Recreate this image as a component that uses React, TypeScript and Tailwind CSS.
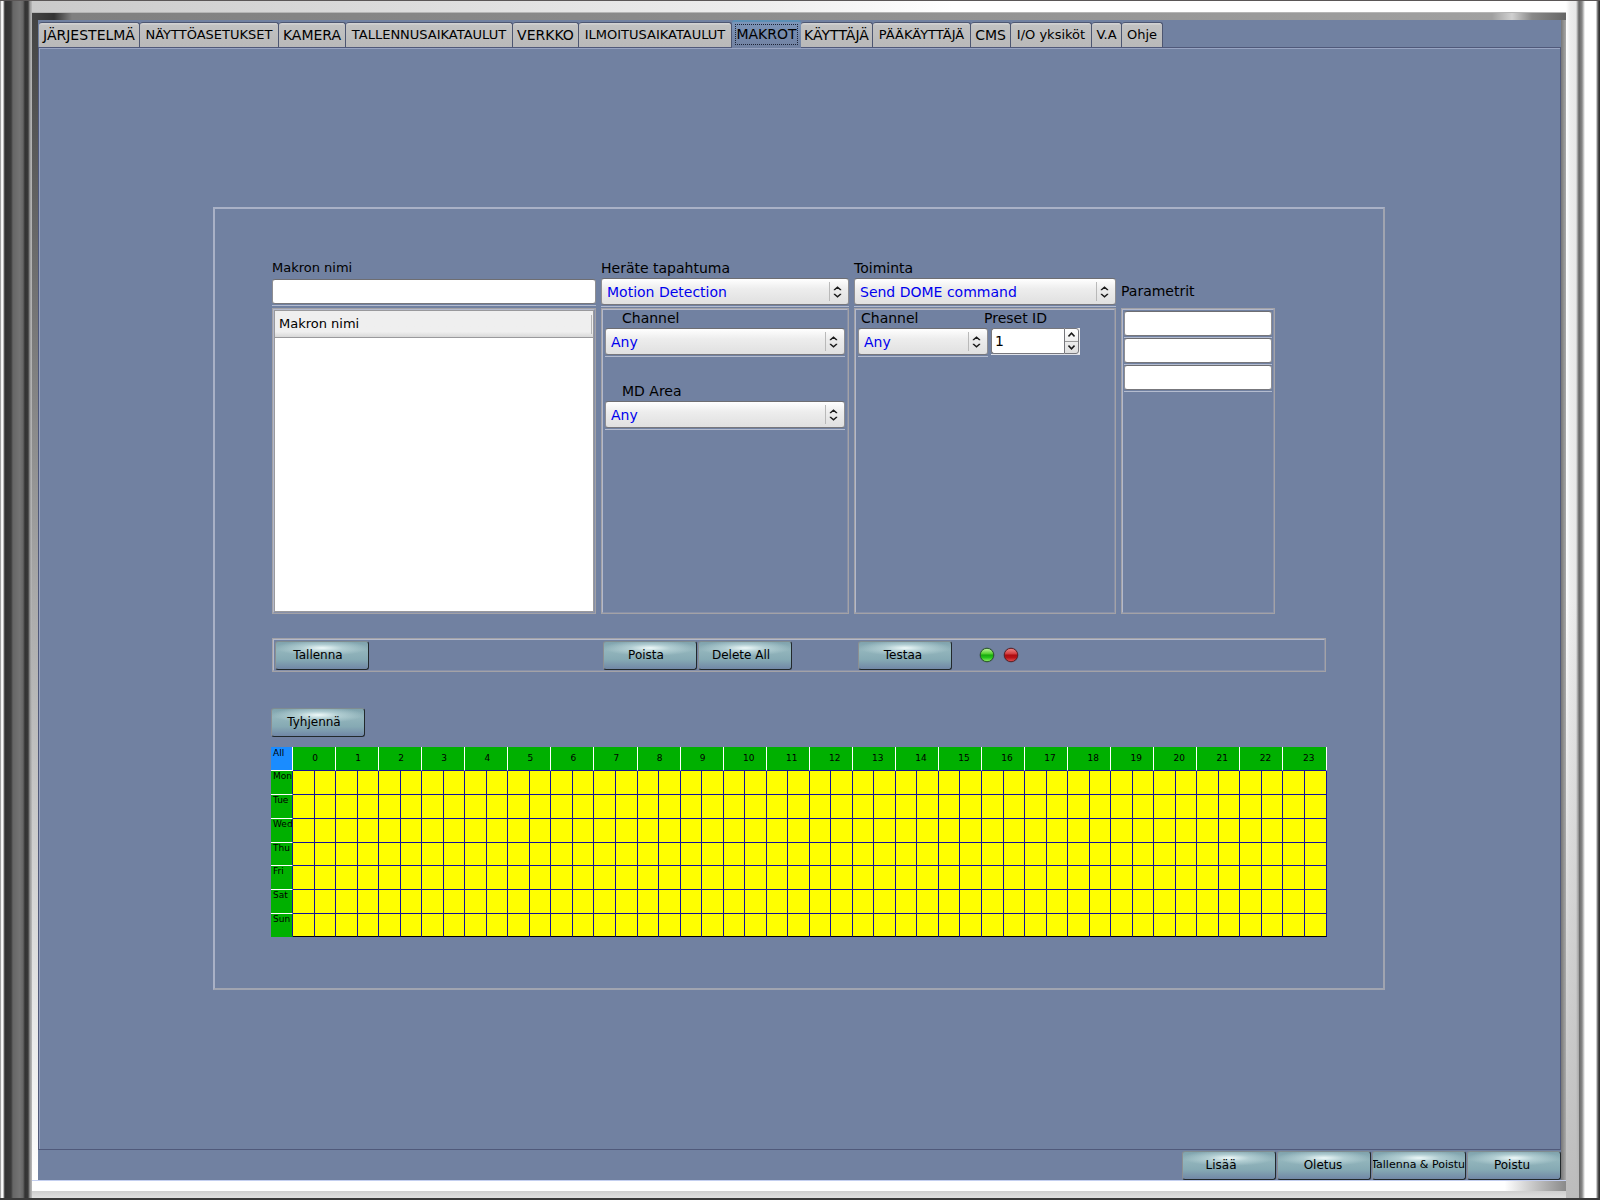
import { useState } from "react";
import type { ReactNode } from "react";

const tabs = [
  { label: "JÄRJESTELMÄ", width: "w-[101px]", size: "text-[14px]" },
  { label: "NÄYTTÖASETUKSET", width: "w-[139px]", size: "text-[13px]" },
  { label: "KAMERA", width: "w-[67px]", size: "text-[14px]" },
  { label: "TALLENNUSAIKATAULUT", width: "w-[167px]", size: "text-[13px]" },
  { label: "VERKKO", width: "w-[66px]", size: "text-[14px]" },
  { label: "ILMOITUSAIKATAULUT", width: "w-[153px]", size: "text-[13px]" },
  { label: "MAKROT", width: "w-[69px]", size: "text-[14px]" },
  { label: "KÄYTTÄJÄ", width: "w-[72px]", size: "text-[14px]" },
  { label: "PÄÄKÄYTTÄJÄ", width: "w-[98px]", size: "text-[13px]" },
  { label: "CMS", width: "w-[40px]", size: "text-[14px]" },
  { label: "I/O yksiköt", width: "w-[81px]", size: "text-[13px]" },
  { label: "V.A", width: "w-[30px]", size: "text-[13px]" },
  { label: "Ohje", width: "w-[41px]", size: "text-[13px]" },
];

const days = [
  { label: "Mon", height: "h-[24px]" },
  { label: "Tue", height: "h-[24px]" },
  { label: "Wed", height: "h-[24px]" },
  { label: "Thu", height: "h-[23px]" },
  { label: "Fri", height: "h-[24px]" },
  { label: "Sat", height: "h-[24px]" },
  { label: "Sun", height: "h-[23px]" },
];

const hours = Array.from({ length: 24 }, (_, i) => i);
const halfHours = Array.from({ length: 48 }, (_, i) => i);

function TabBar() {
  const [active, setActive] = useState("MAKROT");
  return (
    <div role="tablist" className="flex h-[27px] items-end pl-px">
      {tabs.map((t) =>
        t.label === active ? (
          <button
            key={t.label}
            role="tab"
            aria-selected="true"
            className={`${t.width} z-10 h-[28px] shrink-0 self-start rounded-t-[3px] border-t-2 border-t-[#5b8fb5] bg-linear-to-b from-[#7c95b8] to-[#7181a1] px-[3px] pt-px pb-[3px]`}
          >
            <span className={`${t.size} flex h-[21px] items-center justify-center border border-dotted border-[#1c2436] whitespace-nowrap`}>
              {t.label}
            </span>
          </button>
        ) : (
          <button
            key={t.label}
            role="tab"
            aria-selected="false"
            onClick={() => setActive(t.label)}
            className={`${t.width} ${t.size} flex h-[25px] shrink-0 items-center justify-center rounded-t-[3px] border-t border-r border-t-[#4d5671] border-r-[#4d5671] bg-linear-to-b from-[#d2d2d2] from-4% via-[#c2c2c2] via-10% to-[#b9b9b9] whitespace-nowrap`}
          >
            {t.label}
          </button>
        ),
      )}
    </div>
  );
}

function PushButton({ children, text = "justify-center pr-2 text-[12px]" }: { children: ReactNode; text?: string }) {
  return (
    <button
      className={`${text} flex h-[29px] w-[94px] shrink-0 items-center overflow-hidden rounded-[3px] border border-t-[#7f8c90] border-r-[#22292c] border-b-[#22292c] border-l-[#8b8f92] bg-[radial-gradient(ellipse_50%_8px_at_50%_6px,#eef9f9_0%,#c3dcdfaa_45%,#8fb1b900_100%),linear-gradient(to_bottom,#7fa3ad_0%,#93b5bc_30%,#86aab4_65%,#7187a6_100%)] pb-px whitespace-nowrap`}
    >
      {children}
    </button>
  );
}

function Combo({ id, value }: { id: string; value: string }) {
  return (
    <div className="relative w-full border-b border-[#b4bccf] pb-px">
      <select
        id={id}
        defaultValue={value}
        className="block h-[27px] w-full appearance-none rounded-[3px] border border-t-[#6e6e72] border-r-[#8e8e92] border-b-[#77777c] border-l-[#8e8e92] bg-linear-to-b from-white via-[#ededed] via-40% to-[#e0e0e0] pt-px pr-6 pl-[5px] text-[14px] text-[#0000ee] outline-none"
      >
        <option>{value}</option>
      </select>
      <span className="pointer-events-none absolute top-[4px] right-[19px] h-[19px] border-l border-[#b9b9b9]" />
      <svg className="pointer-events-none absolute top-[8px] right-[7px]" width="9" height="12" viewBox="0 0 9 12" fill="none" stroke="#1a1a1a" strokeWidth="1.5">
        <path d="M1.5 4.2V3.8L4.5 1.2L7.5 3.8V4.2M1.5 7.8V8.2L4.5 10.8L7.5 8.2V7.8" />
      </svg>
    </div>
  );
}

function TextField({ id, label }: { id: string; label?: string }) {
  return (
    <div className="w-full border-b border-[#b4bccf] pb-px">
      <input
        id={id}
        type="text"
        aria-label={label}
        className="block h-[25px] w-full rounded-[3px] border border-t-[#6e6e72] border-r-[#8e8e92] border-b-[#77777c] border-l-[#8e8e92] bg-white px-1 text-[14px] outline-none"
      />
    </div>
  );
}

function SpinBox({ id }: { id: string }) {
  const [value, setValue] = useState(1);
  return (
    <div className="flex h-[27px] w-[89px] border-b border-[#dfe2ea]">
      <input
        id={id}
        type="text"
        value={value}
        onChange={(e) => setValue(Number(e.target.value) || 0)}
        className="h-[26px] w-[73px] rounded-l-[3px] border border-r-0 border-[#77777c] bg-white pl-[3px] text-[14px] outline-none"
      />
      <div className="h-[26px] flex-1 bg-[#eeeeee] pr-px">
        <div className="flex h-full flex-col rounded-r-[3px] border border-[#77777c] bg-linear-to-b from-white to-[#dedede]">
          <button aria-label="Increase" onClick={() => setValue(value + 1)} className="flex flex-1 items-center justify-center border-b border-[#9a9a9a]">
            <svg width="7" height="5" viewBox="0 0 7 5" fill="none" stroke="#1a1a1a" strokeWidth="1.5">
              <path d="M.5 4.4L3.5 1.2L6.5 4.4" />
            </svg>
          </button>
          <button aria-label="Decrease" onClick={() => setValue(value - 1)} className="flex flex-1 items-center justify-center">
            <svg width="7" height="5" viewBox="0 0 7 5" fill="none" stroke="#1a1a1a" strokeWidth="1.5">
              <path d="M.5 .6L3.5 3.8L6.5 .6" />
            </svg>
          </button>
        </div>
      </div>
    </div>
  );
}

function Frame({ children, className = "" }: { children?: ReactNode; className?: string }) {
  return (
    <div className={`border border-[#a3a2a6] ${className}`}>
      <div className="h-full border border-t-[#b4b9cb] border-r-[#8790a9] border-b-[#8790a9] border-l-[#b4b9cb]">{children}</div>
    </div>
  );
}

function Led({ color }: { color: "green" | "red" }) {
  const green = color === "green";
  const id = `led-${color}`;
  return (
    <svg width="16" height="16" viewBox="0 0 16 16" role="img" aria-label={color}>
      <defs>
        <linearGradient id={id} x1="0" y1="0" x2="0" y2="1">
          <stop offset="0" stopColor={green ? "#c9f5a8" : "#f08a8a"} />
          <stop offset="0.42" stopColor={green ? "#4fd02c" : "#d23a3c"} />
          <stop offset="0.5" stopColor={green ? "#17a80f" : "#ad0b10"} />
          <stop offset="0.7" stopColor={green ? "#25c51b" : "#b81217"} />
          <stop offset="1" stopColor={green ? "#9df06e" : "#e2585a"} />
        </linearGradient>
      </defs>
      <circle cx="8" cy="8" r="7.6" fill="#4a556c" opacity="0.55" />
      <circle cx="8" cy="8" r="6.7" fill={`url(#${id})`} stroke={green ? "#2c5a2c" : "#5e2229"} strokeWidth="1" />
    </svg>
  );
}

function Schedule() {
  return (
    <table className="mt-[10px] w-full table-fixed border-separate border-spacing-0 text-[9px] leading-[10px]">
      <colgroup>
        <col className="w-[22px]" />
        {halfHours.map((h) => (
          <col key={h} />
        ))}
      </colgroup>
      <thead>
        <tr className="h-[24px]">
          <th className="border-r border-b border-white bg-[#1a8cff] p-0 pt-px pl-0.5 text-left align-top font-normal">All</th>
          {hours.map((h) => (
            <th
              key={h}
              colSpan={2}
              className={`${h > 9 ? "pl-2" : "pl-0.5"} border-r border-b border-r-white border-b-[#14149a] bg-[#00b000] pt-0 pr-0 pb-0.5 text-center align-middle font-normal`}
            >
              {h}
            </th>
          ))}
        </tr>
      </thead>
      <tbody>
        {days.map((d) => (
          <tr key={d.label} className={d.height}>
            <th
              className={`${d.label === "Sun" ? "border-b-[#00b000]" : "border-b-white"} border-r border-b border-r-[#14149a] bg-[#00b000] p-0 pl-0.5 text-left align-top font-normal`}
            >
              {d.label}
            </th>
            {halfHours.map((h) => (
              <td
                key={h}
                className={`${d.label === "Sun" ? "border-b-black" : "border-b-[#14149a]"} border-r border-b border-r-[#14149a] bg-[#ffff00] p-0`}
              />
            ))}
          </tr>
        ))}
      </tbody>
    </table>
  );
}

function MacroPanel() {
  return (
    <div className="w-full max-w-[1172px] border-2 border-t-[#a9b1c6] border-r-[#a0a4b0] border-b-[#a0a4b0] border-l-[#a9b1c6] px-[56px] pt-[50px] pb-[51px]">
      <div className="grid grid-cols-[324fr_248fr_262fr_154fr] gap-[5px] pr-[52px] pl-px">
        <div className="flex min-w-0 flex-col">
          <label htmlFor="macro-name" className="mb-[2px] text-[13px] leading-[18px]">Makron nimi</label>
          <div className="h-[29px]">
            <TextField id="macro-name" />
          </div>
          <Frame className="h-[306px]">
            <div className="h-full border border-[#99999c] bg-white">
              <table className="w-full border-separate border-spacing-0">
                <thead>
                  <tr>
                    <th className="h-[27px] border-b border-[#99999c] bg-linear-to-b from-[#efefef] from-80% to-[#d8d8d8] p-0 text-left text-[13px] font-normal">
                      <div className="mr-px border-r border-[#b5b5b5] pb-0.5 pl-1 leading-[17px]">Makron nimi</div>
                    </th>
                  </tr>
                </thead>
              </table>
            </div>
          </Frame>
        </div>

        <div className="flex min-w-0 flex-col">
          <label htmlFor="trigger" className="mb-px text-[14px] leading-[18px]">Heräte tapahtuma</label>
          <div className="h-[30px]">
            <Combo id="trigger" value="Motion Detection" />
          </div>
          <Frame className="h-[306px]">
            <div className="flex flex-col px-0.5">
              <label htmlFor="trigger-channel" className="pb-0.5 pl-[17px] text-[14px] leading-[16px]">Channel</label>
              <Combo id="trigger-channel" value="Any" />
              <label htmlFor="md-area" className="mt-[26px] pb-0.5 pl-[17px] text-[14px] leading-[16px]">MD Area</label>
              <Combo id="md-area" value="Any" />
            </div>
          </Frame>
        </div>

        <div className="flex min-w-0 flex-col">
          <label htmlFor="action" className="mb-px text-[14px] leading-[18px]">Toiminta</label>
          <div className="h-[30px]">
            <Combo id="action" value="Send DOME command" />
          </div>
          <Frame className="h-[306px]">
            <div className="px-0.5">
              <div className="flex pb-0.5 pl-[3px] text-[14px] leading-[16px]">
                <label htmlFor="action-channel" className="w-[123px]">Channel</label>
                <label htmlFor="preset-id">Preset ID</label>
              </div>
              <div className="flex gap-[3px]">
                <div className="w-[130px]">
                  <Combo id="action-channel" value="Any" />
                </div>
                <SpinBox id="preset-id" />
              </div>
            </div>
          </Frame>
        </div>

        <div className="flex min-w-0 flex-col">
          <div className="flex h-[49px] items-center pt-[14px] text-[14px] leading-[18px]">Parametrit</div>
          <Frame className="h-[306px]">
            <div className="p-px">
              <TextField id="param-1" label="Parametri 1" />
              <TextField id="param-2" label="Parametri 2" />
              <TextField id="param-3" label="Parametri 3" />
            </div>
          </Frame>
        </div>
      </div>

      <div className="mt-[24px] pr-px pl-px">
        <Frame>
          <div className="grid grid-cols-[328fr_255fr_465fr] px-px pt-px">
            <PushButton>Tallenna</PushButton>
            <div className="flex gap-px">
              <PushButton>Poista</PushButton>
              <PushButton>Delete All</PushButton>
            </div>
            <div className="flex items-center">
              <PushButton text="justify-center pr-1 text-[12px]">Testaa</PushButton>
              <div className="flex items-center gap-2 pb-0.5 pl-[27px]">
                <Led color="green" />
                <Led color="red" />
              </div>
            </div>
          </div>
        </Frame>
      </div>

      <div className="mt-[36px]">
        <PushButton>Tyhjennä</PushButton>
      </div>
      <Schedule />
    </div>
  );
}

export default function App() {
  return (
    <div className="flex min-h-screen flex-col border-t border-b-2 border-t-[#5a5656] border-b-[#3a3a3a] font-['DejaVu_Sans',sans-serif] text-black">
      <div className="flex flex-1">
        <div className="w-[32px] shrink-0 bg-[linear-gradient(to_right,#555_0px,#eee_1px,#fff_3px,#777_4px,#333_5px,#3a3a3a_11px,#666_13px,#747474_20px,#666_23px,#333_25px,#383838_28px,#999_30px,#bbb_32px)]" />
        <div className="flex min-w-0 flex-1 flex-col">
          <div className="h-[12px] border-b border-[#b5b5b5] bg-linear-to-r from-[#cacaca] via-[#eeeeee] via-48% to-white to-60%" />
          <div className="h-[7px] bg-[linear-gradient(to_right,#444_0px,#333_22px,#808080_40px,#8a8a8a_600px,#a0a0a0_1460px,#d0d0d0_1480px,#888_1500px,#666_100%)]" />
          <div className="flex flex-1">
            <div className="w-[6px] bg-linear-to-b from-[#444] via-[#aaa] via-50% to-white" />
            <div className="flex min-w-0 flex-1 flex-col bg-[#7181a1]">
              <TabBar />
              <main className="flex flex-1 flex-col items-center justify-center border border-[#50597a] py-4 pr-px shadow-[inset_1px_1px_0_#98a4c2]">
                <MacroPanel />
              </main>
              <footer className="flex justify-end gap-px pt-px">
                <PushButton text="justify-center pr-4 text-[12px]">Lisää</PushButton>
                <PushButton text="justify-center pr-0.5 text-[12px]">Oletus</PushButton>
                <PushButton text="justify-end text-[11px]">Tallenna &amp; Poistu</PushButton>
                <PushButton text="justify-center pr-1 text-[12px]">Poistu</PushButton>
              </footer>
            </div>
            <div className="w-[5px] bg-linear-to-r from-[#777] to-[#aaa]" />
          </div>
          <div className="h-[11px] border-t border-[#c4cff0] bg-linear-to-r from-white from-96% to-[#8a8a8a]" />
          <div className="h-[7px] bg-linear-to-b from-[#cfcfcf] to-[#e0e0e0]" />
        </div>
        <div className="w-[34px] shrink-0 bg-[linear-gradient(to_right,#fff_0px,#eee_4px,#e8e8e8_10px,#666_13px,#888_16px,#fff_19px,#fff_30px,#999_31px,#333_33px)]">
          <div className="h-full w-[13px] bg-linear-to-b from-transparent from-50% to-[#bcbcbc]" />
        </div>
      </div>
    </div>
  );
}
